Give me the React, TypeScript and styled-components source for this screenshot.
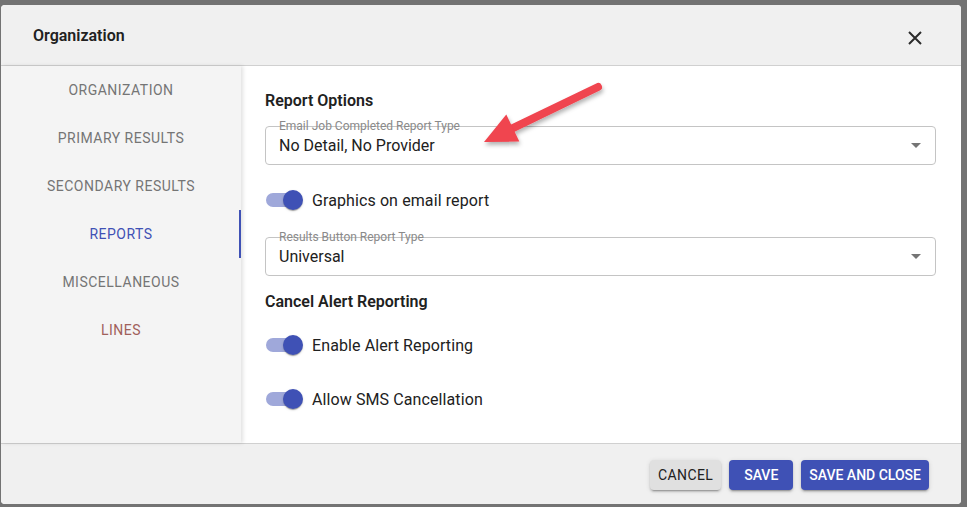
import React from "react";
import styled, { createGlobalStyle } from "styled-components";

const Global = createGlobalStyle`
  html, body { margin: 0; padding: 0; }
  body {
    background: #737373;
    font-family: Roboto, "Liberation Sans", Arial, sans-serif;
    width: 967px;
    height: 507px;
    overflow: hidden;
  }
`;

const Dialog = styled.div`
  position: relative;
  margin: 5px 0 0 1px;
  width: 960px;
  height: 499px;
  background: #fff;
  border-radius: 4px;
  overflow: hidden;
  display: flex;
  flex-direction: column;
`;

const Header = styled.div`
  height: 61px;
  background: #f0f0f0;
  border-bottom: 1px solid #d0d0d0;
  display: flex;
  align-items: center;
  justify-content: space-between;
  padding: 0 38px 0 32px;
  box-sizing: border-box;
  flex-shrink: 0;
`;

const Title = styled.div`
  font-size: 16px;
  font-weight: 600;
  color: #212121;
`;

const CloseBtn = styled.button`
  border: none;
  background: transparent;
  padding: 0;
  width: 16px;
  height: 16px;
  display: flex;
  align-items: center;
  justify-content: center;
  margin-top: 6px;
`;

const Body = styled.div`
  flex: 1;
  display: flex;
  min-height: 0;
`;

const Sidebar = styled.div`
  width: 240px;
  background: #f4f4f4;
  box-shadow: 2px 0 4px rgba(0, 0, 0, 0.12);
  display: flex;
  flex-direction: column;
  position: relative;
  z-index: 1;
`;

const Tab = styled.div<{ $active?: boolean; $color?: string }>`
  height: 48px;
  display: flex;
  align-items: center;
  justify-content: center;
  font-size: 14px;
  letter-spacing: 0.5px;
  color: ${(p) => p.$color || "#757575"};
  position: relative;
  ${(p) =>
    p.$active &&
    `
    &::after {
      content: "";
      position: absolute;
      right: 0;
      top: 0;
      bottom: 0;
      width: 2px;
      background: #3f51b5;
    }
  `}
`;

const Content = styled.div`
  flex: 1;
  padding: 25px 25px 0 24px;
  position: relative;
  display: flex;
  flex-direction: column;
`;

const Heading = styled.div<{ $mt?: number }>`
  font-size: 16px;
  font-weight: 600;
  color: #212121;
  line-height: 20px;
  margin-top: ${(p) => p.$mt ?? 0}px;
`;

const SelectBox = styled.div<{ $mt: number }>`
  position: relative;
  height: 39px;
  border: 1px solid #c4c4c4;
  border-radius: 4px;
  box-sizing: border-box;
  display: flex;
  align-items: center;
  justify-content: space-between;
  padding: 0 14px 0 13px;
  margin-top: ${(p) => p.$mt}px;
`;

const SelectLabel = styled.span`
  position: absolute;
  left: 13px;
  top: -9px;
  font-size: 12px;
  line-height: 16px;
  color: #8a8a8a;
`;

const SelectValue = styled.span`
  font-size: 16px;
  color: #212121;
`;

const SwitchRow = styled.div<{ $mt: number }>`
  height: 38px;
  display: flex;
  align-items: center;
  gap: 11px;
  margin-top: ${(p) => p.$mt}px;
  font-size: 16px;
  letter-spacing: 0.1px;
  color: #212121;
`;

const Track = styled.div`
  position: relative;
  width: 35px;
  height: 14px;
  border-radius: 7px;
  background: #9fa8da;
  margin-left: 1px;
`;

const Thumb = styled.div`
  position: absolute;
  right: -2px;
  top: -3px;
  width: 20px;
  height: 20px;
  border-radius: 50%;
  background: #3f51b5;
  box-shadow: 0 2px 1px -1px rgba(0, 0, 0, 0.2), 0 1px 1px rgba(0, 0, 0, 0.14),
    0 1px 3px rgba(0, 0, 0, 0.12);
`;

const Footer = styled.div`
  height: 61px;
  background: #f0f0f0;
  border-top: 1px solid #d0d0d0;
  display: flex;
  align-items: center;
  justify-content: flex-end;
  gap: 8px;
  padding: 0 32px 0 0;
  box-sizing: border-box;
  flex-shrink: 0;
`;

const Button = styled.button<{ $primary?: boolean }>`
  height: 30px;
  min-width: 64px;
  padding: 0 8px;
  border: none;
  border-radius: 4px;
  font-family: Roboto, "Liberation Sans", Arial, sans-serif;
  font-size: 14px;
  font-weight: ${(p) => (p.$primary ? 500 : 400)};
  letter-spacing: ${(p) => (p.$primary ? "0" : "0.4px")};
  text-transform: uppercase;
  background: ${(p) => (p.$primary ? "#3f51b5" : "#e0e0e0")};
  color: ${(p) => (p.$primary ? "#fff" : "#212121")};
  box-shadow: 0 3px 1px -2px rgba(0, 0, 0, 0.2), 0 2px 2px rgba(0, 0, 0, 0.14),
    0 1px 5px rgba(0, 0, 0, 0.12);
  margin-top: 2px;
`;

const ArrowOverlay = styled.svg`
  position: absolute;
  left: 0;
  top: 0;
  pointer-events: none;
  overflow: visible;
`;

const Caret = () => (
  <svg width="10" height="5" viewBox="0 0 10 5">
    <path d="M0 0 L10 0 L5 5 Z" fill="#757575" />
  </svg>
);

const Switch = ({ label, mt }: { label: string; mt: number }) => (
  <SwitchRow $mt={mt}>
    <Track>
      <Thumb />
    </Track>
    <span>{label}</span>
  </SwitchRow>
);

const Select = ({ label, value, mt }: { label: string; value: string; mt: number }) => (
  <SelectBox $mt={mt}>
    <SelectLabel>{label}</SelectLabel>
    <SelectValue>{value}</SelectValue>
    <Caret />
  </SelectBox>
);

export default function App() {
  // content origin: x=241, y=67 in page coords
  const ox = 241;
  const oy = 67;
  const tip = { x: 484 - ox, y: 143 - oy };
  const tail = { x: 598 - ox, y: 88 - oy };
  const dx = tip.x - tail.x;
  const dy = tip.y - tail.y;
  const len = Math.hypot(dx, dy);
  const ux = dx / len;
  const uy = dy / len;
  const hl = 32;
  const hw = 15;
  const bx = tip.x - ux * hl;
  const by = tip.y - uy * hl;
  const px = -uy;
  const py = ux;
  const head = `${tip.x},${tip.y} ${bx + px * hw},${by + py * hw} ${bx - px * hw},${by - py * hw}`;
  const shaftEnd = { x: bx + ux * 4, y: by + uy * 4 };

  return (
    <>
      <Global />
      <Dialog>
        <Header>
          <Title>Organization</Title>
          <CloseBtn aria-label="close">
            <svg width="14" height="14" viewBox="0 0 14 14">
              <path d="M1 1 L13 13 M13 1 L1 13" stroke="#2b2b2b" strokeWidth="2" />
            </svg>
          </CloseBtn>
        </Header>
        <Body>
          <Sidebar>
            <Tab>ORGANIZATION</Tab>
            <Tab>PRIMARY RESULTS</Tab>
            <Tab>SECONDARY RESULTS</Tab>
            <Tab $active $color="#3f51b5">
              REPORTS
            </Tab>
            <Tab>MISCELLANEOUS</Tab>
            <Tab $color="#a0605a">LINES</Tab>
          </Sidebar>
          <Content>
            <Heading>Report Options</Heading>
            <Select mt={15} label="Email Job Completed Report Type" value="No Detail, No Provider" />
            <Switch mt={16} label="Graphics on email report" />
            <Select mt={18} label="Results Button Report Type" value="Universal" />
            <Heading $mt={16}>Cancel Alert Reporting</Heading>
            <Switch mt={14} label="Enable Alert Reporting" />
            <Switch mt={16} label="Allow SMS Cancellation" />
            <ArrowOverlay width="1" height="1">
              <defs>
                <filter id="sh" x="-20%" y="-20%" width="140%" height="160%">
                  <feDropShadow dx="1" dy="3" stdDeviation="2" floodColor="#000" floodOpacity="0.3" />
                </filter>
              </defs>
              <g filter="url(#sh)">
                <line
                  x1={tail.x}
                  y1={tail.y}
                  x2={shaftEnd.x}
                  y2={shaftEnd.y}
                  stroke="#f0444f"
                  strokeWidth="8"
                  strokeLinecap="round"
                />
                <polygon points={head} fill="#f0444f" />
              </g>
            </ArrowOverlay>
          </Content>
        </Body>
        <Footer>
          <Button>Cancel</Button>
          <Button $primary>Save</Button>
          <Button $primary>Save and Close</Button>
        </Footer>
      </Dialog>
    </>
  );
}
